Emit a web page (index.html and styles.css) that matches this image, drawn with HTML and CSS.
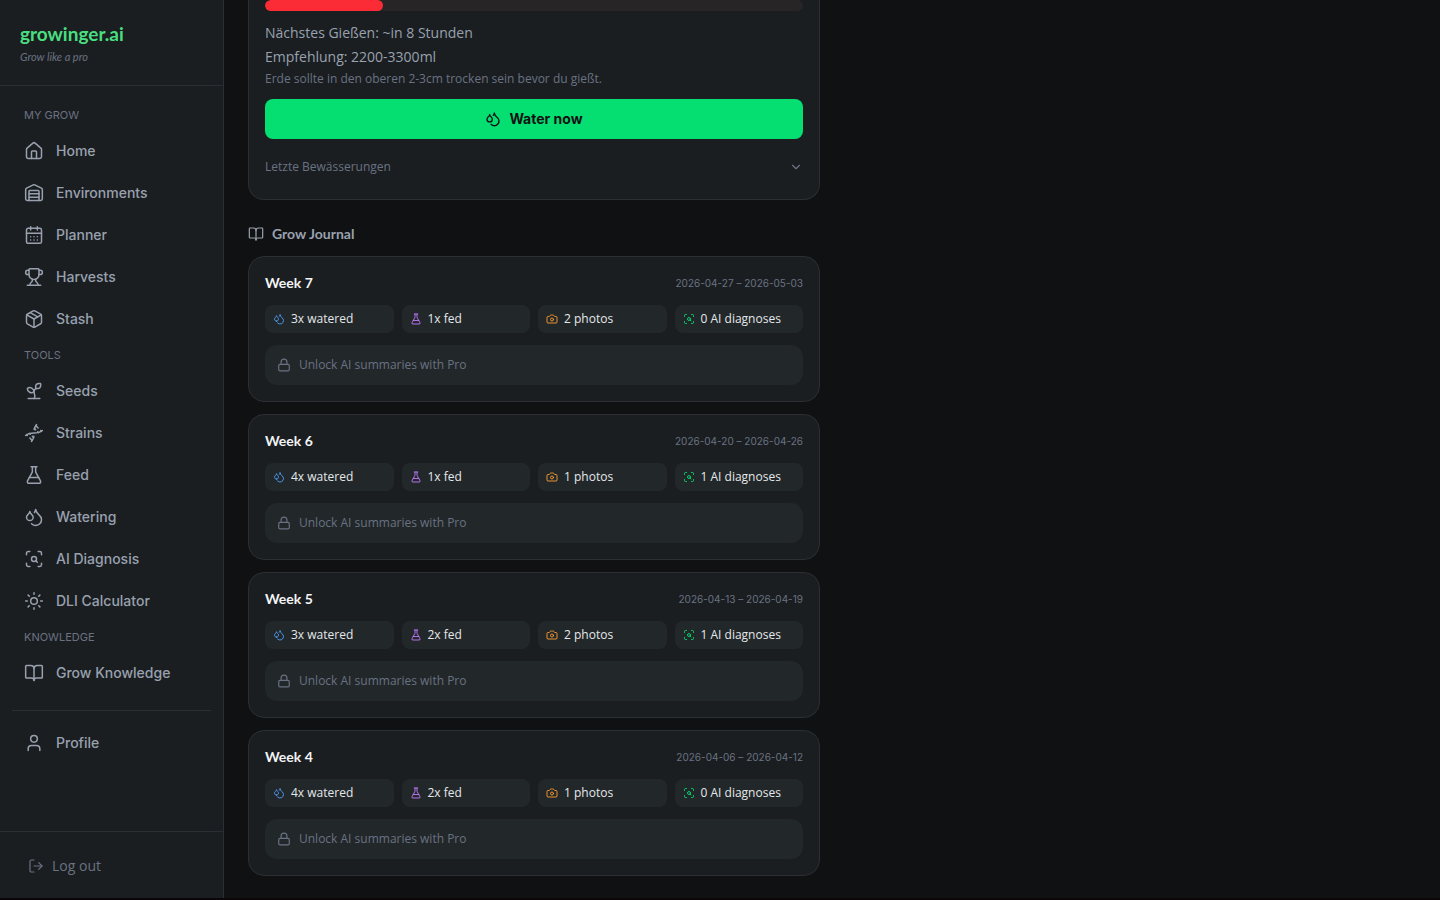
FILE: index.html
```
<!DOCTYPE html>
<html lang="de">
<head>
    <meta charset="UTF-8">
    <meta name="viewport" content="width=device-width, initial-scale=1.0">
    <title>growinger.ai</title>
    <link rel="stylesheet" href="styles.css">
</head>
<body>
    <!-- Icon set -->
    <svg class="icon-set" aria-hidden="true">
        <symbol id="home" viewBox="0 0 24 24"><path d="M15 21v-8a1 1 0 0 0-1-1h-4a1 1 0 0 0-1 1v8"/><path d="M3 10a2 2 0 0 1 .709-1.528l7-5.999a2 2 0 0 1 2.582 0l7 5.999A2 2 0 0 1 21 10v9a2 2 0 0 1-2 2H5a2 2 0 0 1-2-2z"/></symbol>
        <symbol id="warehouse" viewBox="0 0 24 24"><path d="M18 21V10a1 1 0 0 0-1-1H7a1 1 0 0 0-1 1v11"/><path d="M22 19a2 2 0 0 1-2 2H4a2 2 0 0 1-2-2V8a2 2 0 0 1 1.132-1.803l7.95-3.974a2 2 0 0 1 1.837 0l7.948 3.974A2 2 0 0 1 22 8z"/><path d="M6 13h12M6 17h12"/></symbol>
        <symbol id="calendar" viewBox="0 0 24 24"><path d="M8 2v4M16 2v4"/><rect width="18" height="18" x="3" y="4" rx="2"/><path d="M3 10h18M8 14h.01M12 14h.01M16 14h.01M8 18h.01M12 18h.01M16 18h.01"/></symbol>
        <symbol id="trophy" viewBox="0 0 24 24"><path d="M10 14.66v1.626a2 2 0 0 1-.976 1.696A5 5 0 0 0 7 21.978"/><path d="M14 14.66v1.626a2 2 0 0 0 .976 1.696A5 5 0 0 1 17 21.978"/><path d="M18 9h1.5a1 1 0 0 0 0-5H18"/><path d="M4 22h16"/><path d="M6 9a6 6 0 0 0 12 0V3a1 1 0 0 0-1-1H7a1 1 0 0 0-1 1z"/><path d="M6 9H4.5a1 1 0 0 1 0-5H6"/></symbol>
        <symbol id="package" viewBox="0 0 24 24"><path d="M11 21.73a2 2 0 0 0 2 0l7-4A2 2 0 0 0 21 16V8a2 2 0 0 0-1-1.73l-7-4a2 2 0 0 0-2 0l-7 4A2 2 0 0 0 3 8v8a2 2 0 0 0 1 1.73z"/><path d="M12 22V12"/><path d="M3.29 7 12 12l8.71-5"/><path d="m7.5 4.27 9 5.15"/></symbol>
        <symbol id="sprout" viewBox="0 0 24 24"><path d="M14 9.536V7a4 4 0 0 1 4-4h1.5a.5.5 0 0 1 .5.5V5a4 4 0 0 1-4 4 4 4 0 0 0-4 4c0 2 1 3 1 5a5 5 0 0 1-1 3"/><path d="M4 9a5 5 0 0 1 8 4 5 5 0 0 1-8-4"/><path d="M5 21h14"/></symbol>
        <symbol id="dna" viewBox="0 0 24 24"><path d="m10 16 1.5 1.5"/><path d="m14 8-1.5-1.5"/><path d="M15 2c-1.798 1.998-2.518 3.995-2.807 5.993"/><path d="m16.5 10.5 1 1"/><path d="m17 6-2.891-2.891"/><path d="M2 15c6.667-6 13.333 0 20-6"/><path d="m20 9 .891.891"/><path d="M3.109 14.109 4 15"/><path d="m6.5 12.5 1 1"/><path d="m7 18 2.891 2.891"/><path d="M9 22c1.798-1.998 2.518-3.995 2.807-5.993"/></symbol>
        <symbol id="flask" viewBox="0 0 24 24"><path d="M14 2v6a2 2 0 0 0 .245.96l5.51 10.08A2 2 0 0 1 18 22H6a2 2 0 0 1-1.755-2.96l5.51-10.08A2 2 0 0 0 10 8V2"/><path d="M6.453 15h11.094"/><path d="M8.5 2h7"/></symbol>
        <symbol id="droplets" viewBox="0 0 24 24"><path d="M7 16.3c2.2 0 4-1.83 4-4.05 0-1.16-.57-2.26-1.71-3.19S7.29 6.75 7 5.3c-.29 1.45-1.14 2.84-2.29 3.76S3 11.1 3 12.25c0 2.22 1.8 4.05 4 4.05z"/><path d="M12.56 6.6A10.97 10.97 0 0 0 14 3.02c.5 2.5 2 4.9 4 6.5s3 3.5 3 5.5a6.98 6.98 0 0 1-11.91 4.97"/></symbol>
        <symbol id="scan" viewBox="0 0 24 24"><path d="M3 7V5a2 2 0 0 1 2-2h2M17 3h2a2 2 0 0 1 2 2v2M21 17v2a2 2 0 0 1-2 2h-2M7 21H5a2 2 0 0 1-2-2v-2"/><circle cx="12" cy="12" r="3"/><path d="m16 16-1.9-1.9"/></symbol>
        <symbol id="sun" viewBox="0 0 24 24"><circle cx="12" cy="12" r="4"/><path d="M12 2v2M12 20v2M4.93 4.93l1.41 1.41M17.66 17.66l1.41 1.41M2 12h2M20 12h2M6.34 17.66l-1.41 1.41M19.07 4.93l-1.41 1.41"/></symbol>
        <symbol id="book" viewBox="0 0 24 24"><path d="M12 7v14"/><path d="M3 18a1 1 0 0 1-1-1V4a1 1 0 0 1 1-1h5a4 4 0 0 1 4 4 4 4 0 0 1 4-4h5a1 1 0 0 1 1 1v13a1 1 0 0 1-1 1h-6a3 3 0 0 0-3 3 3 3 0 0 0-3-3z"/></symbol>
        <symbol id="user" viewBox="0 0 24 24"><path d="M19 21v-2a4 4 0 0 0-4-4H9a4 4 0 0 0-4 4v2"/><circle cx="12" cy="7" r="4"/></symbol>
        <symbol id="logout" viewBox="0 0 24 24"><path d="m16 17 5-5-5-5"/><path d="M21 12H9"/><path d="M9 21H5a2 2 0 0 1-2-2V5a2 2 0 0 1 2-2h4"/></symbol>
        <symbol id="chevron" viewBox="0 0 24 24"><path d="m6 9 6 6 6-6"/></symbol>
        <symbol id="camera" viewBox="0 0 24 24"><path d="M13.997 4a2 2 0 0 1 1.76 1.05l.486.9A2 2 0 0 0 18.003 7H20a2 2 0 0 1 2 2v9a2 2 0 0 1-2 2H4a2 2 0 0 1-2-2V9a2 2 0 0 1 2-2h1.997a2 2 0 0 0 1.759-1.048l.489-.904A2 2 0 0 1 10.004 4z"/><circle cx="12" cy="13" r="3"/></symbol>
        <symbol id="lock" viewBox="0 0 24 24"><rect width="18" height="11" x="3" y="11" rx="2"/><path d="M7 11V7a5 5 0 0 1 10 0v4"/></symbol>
    </svg>

    <div class="layout">
        <aside class="sidebar">
            <div class="brand">
                <a class="brand-name" href="#">growinger.ai</a>
                <p class="tagline">Grow like a pro</p>
            </div>

            <nav class="nav">
                <h2 class="nav-label">MY GROW</h2>
                <a class="nav-link" href="#"><svg class="icon"><use href="#home"/></svg>Home</a>
                <a class="nav-link" href="#"><svg class="icon"><use href="#warehouse"/></svg>Environments</a>
                <a class="nav-link" href="#"><svg class="icon"><use href="#calendar"/></svg>Planner</a>
                <a class="nav-link" href="#"><svg class="icon"><use href="#trophy"/></svg>Harvests</a>
                <a class="nav-link" href="#"><svg class="icon"><use href="#package"/></svg>Stash</a>
                <h2 class="nav-label">TOOLS</h2>
                <a class="nav-link" href="#"><svg class="icon"><use href="#sprout"/></svg>Seeds</a>
                <a class="nav-link" href="#"><svg class="icon"><use href="#dna"/></svg>Strains</a>
                <a class="nav-link" href="#"><svg class="icon"><use href="#flask"/></svg>Feed</a>
                <a class="nav-link" href="#"><svg class="icon"><use href="#droplets"/></svg>Watering</a>
                <a class="nav-link" href="#"><svg class="icon"><use href="#scan"/></svg>AI Diagnosis</a>
                <a class="nav-link" href="#"><svg class="icon"><use href="#sun"/></svg>DLI Calculator</a>
                <h2 class="nav-label">KNOWLEDGE</h2>
                <a class="nav-link" href="#"><svg class="icon"><use href="#book"/></svg>Grow Knowledge</a>
                <hr class="nav-divider">
                <a class="nav-link" href="#"><svg class="icon"><use href="#user"/></svg>Profile</a>
            </nav>

            <div class="sidebar-footer">
                <button type="button" class="logout"><svg class="icon icon-md"><use href="#logout"/></svg>Log out</button>
            </div>
        </aside>

        <main class="content">
            <section class="card watering">
                <div class="moisture"><div class="moisture-level" style="width: 22%"></div></div>
                <p class="info">Nächstes Gießen: ~in 8 Stunden</p>
                <p class="info">Empfehlung: 2200-3300ml</p>
                <p class="hint">Erde sollte in den oberen 2-3cm trocken sein bevor du gießt.</p>
                <button type="button" class="water-button"><svg class="icon icon-md"><use href="#droplets"/></svg>Water now</button>
                <button type="button" class="history">Letzte Bewässerungen<svg class="icon icon-sm"><use href="#chevron"/></svg></button>
            </section>

            <h2 class="journal-title"><svg class="icon icon-md"><use href="#book"/></svg>Grow Journal</h2>

            <div class="weeks">
                <article class="card week">
                    <header class="week-header"><h3>Week 7</h3><span class="dates">2026-04-27 – 2026-05-03</span></header>
                    <ul class="stats">
                        <li><svg class="icon icon-xs blue"><use href="#droplets"/></svg>3x watered</li>
                        <li><svg class="icon icon-xs purple"><use href="#flask"/></svg>1x fed</li>
                        <li><svg class="icon icon-xs orange"><use href="#camera"/></svg>2 photos</li>
                        <li><svg class="icon icon-xs green"><use href="#scan"/></svg>0 AI diagnoses</li>
                    </ul>
                    <p class="locked"><svg class="icon icon-sm"><use href="#lock"/></svg>Unlock AI summaries with Pro</p>
                </article>

                <article class="card week">
                    <header class="week-header"><h3>Week 6</h3><span class="dates">2026-04-20 – 2026-04-26</span></header>
                    <ul class="stats">
                        <li><svg class="icon icon-xs blue"><use href="#droplets"/></svg>4x watered</li>
                        <li><svg class="icon icon-xs purple"><use href="#flask"/></svg>1x fed</li>
                        <li><svg class="icon icon-xs orange"><use href="#camera"/></svg>1 photos</li>
                        <li><svg class="icon icon-xs green"><use href="#scan"/></svg>1 AI diagnoses</li>
                    </ul>
                    <p class="locked"><svg class="icon icon-sm"><use href="#lock"/></svg>Unlock AI summaries with Pro</p>
                </article>

                <article class="card week">
                    <header class="week-header"><h3>Week 5</h3><span class="dates">2026-04-13 – 2026-04-19</span></header>
                    <ul class="stats">
                        <li><svg class="icon icon-xs blue"><use href="#droplets"/></svg>3x watered</li>
                        <li><svg class="icon icon-xs purple"><use href="#flask"/></svg>2x fed</li>
                        <li><svg class="icon icon-xs orange"><use href="#camera"/></svg>2 photos</li>
                        <li><svg class="icon icon-xs green"><use href="#scan"/></svg>1 AI diagnoses</li>
                    </ul>
                    <p class="locked"><svg class="icon icon-sm"><use href="#lock"/></svg>Unlock AI summaries with Pro</p>
                </article>

                <article class="card week">
                    <header class="week-header"><h3>Week 4</h3><span class="dates">2026-04-06 – 2026-04-12</span></header>
                    <ul class="stats">
                        <li><svg class="icon icon-xs blue"><use href="#droplets"/></svg>4x watered</li>
                        <li><svg class="icon icon-xs purple"><use href="#flask"/></svg>2x fed</li>
                        <li><svg class="icon icon-xs orange"><use href="#camera"/></svg>1 photos</li>
                        <li><svg class="icon icon-xs green"><use href="#scan"/></svg>0 AI diagnoses</li>
                    </ul>
                    <p class="locked"><svg class="icon icon-sm"><use href="#lock"/></svg>Unlock AI summaries with Pro</p>
                </article>
            </div>
        </main>
    </div>
</body>
</html>
```
FILE: styles.css
```
* {
    box-sizing: border-box;
    margin: 0;
    padding: 0;
}

body {
    background-color: #101113;
    color: #99a1af;
    font-family: "Open Sans", "Noto Sans", sans-serif;
    font-size: 14px;
    line-height: 20px;
}

/* Thin dark edge along the bottom of the window */
body::after {
    content: "";
    position: fixed;
    left: 0;
    right: 0;
    bottom: 0;
    height: 2px;
    background-color: #0d0508;
}

a {
    color: inherit;
    text-decoration: none;
}

button {
    border: none;
    background: none;
    color: inherit;
    font: inherit;
    cursor: pointer;
}

/* Icons */
.icon-set {
    display: none;
}

.icon {
    flex-shrink: 0;
    width: 20px;
    height: 20px;
    fill: none;
    stroke: currentColor;
    stroke-width: 1.8;
    stroke-linecap: round;
    stroke-linejoin: round;
}

.icon-md {
    width: 16px;
    height: 16px;
}

.icon-sm {
    width: 14px;
    height: 14px;
    stroke-width: 2;
}

.icon-xs {
    width: 12px;
    height: 12px;
}

.blue { color: #51a2ff; }
.purple { color: #c27aff; }
.orange { color: #ff9f32; }
.green { color: #05df72; }

.layout {
    display: flex;
    min-height: 100vh;
}

/* Sidebar */
.sidebar {
    display: flex;
    flex-direction: column;
    flex-shrink: 0;
    width: 224px;
    background-color: #1a1e21;
    border-right: 1px solid #2b2f33;
}

.brand {
    padding: 20px;
    border-bottom: 1px solid #2b2f33;
}

.brand-name {
    display: block;
    color: #4ade80;
    font-family: Lato, sans-serif;
    font-size: 19px;
    font-weight: 700;
    line-height: 28px;
}

.tagline {
    color: #6a7282;
    font-family: Lato, sans-serif;
    font-size: 11px;
    font-style: italic;
    line-height: 17px;
}

.nav {
    display: flex;
    flex-direction: column;
    flex: 1;
    gap: 2px;
    padding: 15px 12px;
    font-family: Inter, sans-serif;
}

.nav-label {
    padding: 6px 12px;
    color: #6a7282;
    font-size: 11px;
    font-weight: 400;
    line-height: 16px;
}

.nav-link {
    display: flex;
    align-items: center;
    gap: 12px;
    height: 40px;
    padding: 0 12px;
    border-radius: 8px;
    font-weight: 500;
}

.nav-divider {
    margin: 15px 0 10px;
    border: none;
    border-top: 1px solid #2b2f33;
}

.sidebar-footer {
    padding: 16px;
    border-top: 1px solid #2b2f33;
}

.logout {
    display: flex;
    align-items: center;
    gap: 8px;
    width: 100%;
    height: 36px;
    padding: 0 12px;
    color: #6a7282;
}

/* Content */
.content {
    flex: 1;
    max-width: 620px;
    padding: 0 24px 24px;
}

.card {
    padding: 16px;
    background-color: #1a1e21;
    border: 1px solid #2b2f33;
    border-radius: 16px;
}

.watering {
    padding-top: 0;
    border-top: none;
    border-radius: 0 0 16px 16px;
}

.moisture {
    height: 11px;
    margin-bottom: 12px;
    background-color: #282526;
    border-radius: 6px;
    overflow: hidden;
}

.moisture-level {
    height: 100%;
    background-color: #fb2c36;
    border-radius: 6px;
}

.info {
    margin-bottom: 4px;
}

.hint {
    margin-bottom: 12px;
    color: #6a7282;
    font-size: 12px;
    line-height: 16px;
}

.water-button {
    display: flex;
    align-items: center;
    justify-content: center;
    gap: 8px;
    width: 100%;
    height: 40px;
    margin-bottom: 12px;
    background-color: #05df72;
    border-radius: 8px;
    color: #101113;
    font-family: Inter, sans-serif;
    font-weight: 700;
}

.water-button .icon {
    stroke-width: 2;
}

.history {
    display: flex;
    align-items: center;
    justify-content: space-between;
    width: 100%;
    padding: 8px 0;
    color: #6a7282;
    font-size: 12px;
    line-height: 16px;
}

.journal-title {
    display: flex;
    align-items: center;
    gap: 8px;
    margin: 24px 0 12px;
    font-family: Lato, sans-serif;
    font-size: 14px;
    font-weight: 700;
}

.weeks {
    display: flex;
    flex-direction: column;
    gap: 12px;
}

.week-header {
    display: flex;
    align-items: center;
    justify-content: space-between;
    margin-bottom: 12px;
}

.week-header h3 {
    color: #f3f4f6;
    font-family: Lato, sans-serif;
    font-size: 14px;
    font-weight: 700;
}

.dates {
    color: #6a7282;
    font-family: Inter, sans-serif;
    font-size: 10px;
}

.stats {
    display: grid;
    grid-template-columns: repeat(4, 1fr);
    gap: 8px;
    margin-bottom: 12px;
    list-style: none;
}

.stats li {
    display: flex;
    align-items: center;
    gap: 6px;
    padding: 6px 8px;
    background-color: #22272a;
    border-radius: 8px;
    color: #e5e7eb;
    font-size: 12px;
    line-height: 16px;
}

.locked {
    display: flex;
    align-items: center;
    gap: 8px;
    padding: 12px;
    background-color: #22272a;
    border-radius: 12px;
    color: #6a7282;
    font-size: 12px;
    line-height: 16px;
}
```
